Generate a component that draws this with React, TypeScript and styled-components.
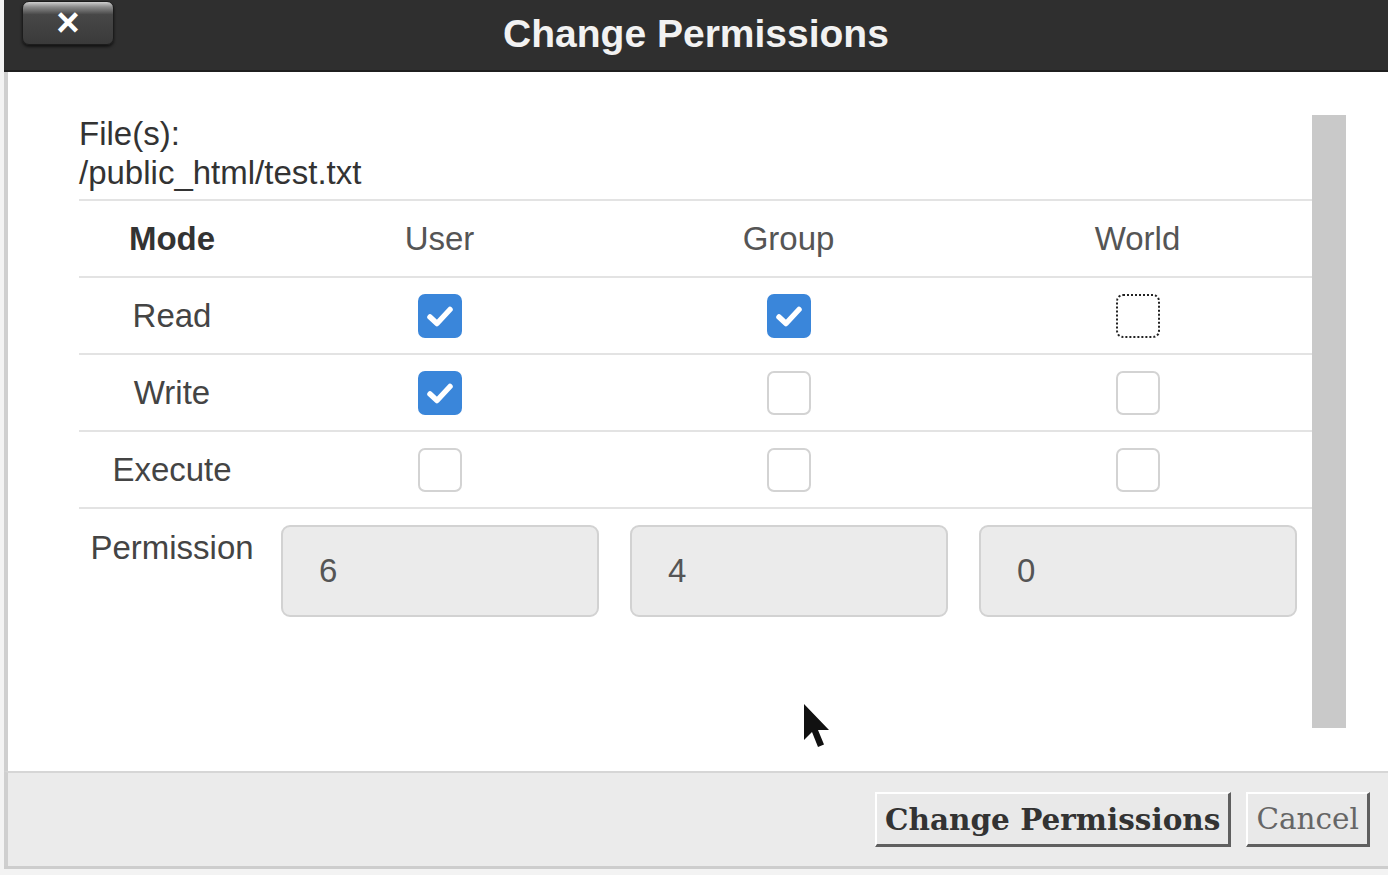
import styled, { createGlobalStyle } from "styled-components";

const GlobalStyle = createGlobalStyle`
  html, body {
    margin: 0;
    padding: 0;
    background: #f3f3f3;
    font-family: "Liberation Sans", Arial, sans-serif;
  }
  * {
    box-sizing: border-box;
  }
`;

type Perm = { label: string; user: boolean; group: boolean; world: boolean };

const rows: Perm[] = [
  { label: "Read", user: true, group: true, world: false },
  { label: "Write", user: true, group: false, world: false },
  { label: "Execute", user: false, group: false, world: false },
];

const CheckBox = ({ checked, focused }: { checked: boolean; focused?: boolean }) => (
  <Box $checked={checked} $focused={focused}>
    {checked && (
      <svg width="44" height="44" viewBox="0 0 44 44">
        <path
          d="M12 23 L19 29.5 L32 15.5"
          fill="none"
          stroke="#fff"
          strokeWidth="5.5"
          strokeLinecap="round"
          strokeLinejoin="round"
        />
      </svg>
    )}
  </Box>
);

export default function App() {
  return (
    <Page>
      <GlobalStyle />
      <Dialog>
        <TitleBar>
          <CloseButton>×</CloseButton>
          <Title>Change Permissions</Title>
        </TitleBar>

        <Body>
          <ScrollArea>
            <Content>
              <FileInfo>
                <div>File(s):</div>
                <div>/public_html/test.txt</div>
              </FileInfo>

              <Row>
                <HeadCell $bold>Mode</HeadCell>
                <HeadCell>User</HeadCell>
                <HeadCell>Group</HeadCell>
                <HeadCell>World</HeadCell>
              </Row>

              {rows.map((r, i) => (
                <Row key={r.label}>
                  <LabelCell>{r.label}</LabelCell>
                  <Cell>
                    <CheckBox checked={r.user} />
                  </Cell>
                  <Cell>
                    <CheckBox checked={r.group} />
                  </Cell>
                  <Cell>
                    <CheckBox checked={r.world} focused={i === 0} />
                  </Cell>
                </Row>
              ))}

              <PermRow>
                <PermLabel>Permission</PermLabel>
                <PermCell>
                  <PermInput readOnly value="6" />
                </PermCell>
                <PermCell>
                  <PermInput readOnly value="4" />
                </PermCell>
                <PermCell>
                  <PermInput readOnly value="0" />
                </PermCell>
              </PermRow>
            </Content>
            <ScrollBar />
          </ScrollArea>
        </Body>

        <Footer>
          <Button $primary>Change Permissions</Button>
          <Button>Cancel</Button>
        </Footer>
      </Dialog>

      <Cursor width="30" height="50" viewBox="0 0 30 50">
        <path d="M2 2 L2 38 L10 30 L16 45 L22 42.5 L16 28 L27 28 Z" fill="#111" />
      </Cursor>
    </Page>
  );
}

const Page = styled.div`
  position: relative;
  width: 1388px;
  height: 875px;
  overflow: hidden;
  background: #f3f3f3;
`;

const Dialog = styled.div`
  margin-left: 4px;
  width: 1384px;
  display: flex;
  flex-direction: column;
  border-bottom: 3px solid #cdcdcd;
`;

const TitleBar = styled.div`
  height: 72px;
  background: #2f2f2f;
  border-bottom: 2px solid #1f1f1f;
  display: grid;
  grid-template-columns: 1fr auto 1fr;
  align-items: start;
`;

const CloseButton = styled.div`
  justify-self: start;
  margin-left: 18px;
  margin-top: 1px;
  width: 92px;
  height: 44px;
  border-radius: 7px;
  border: 1px solid #1c1c1c;
  background: linear-gradient(#cfcfcf 0, #8a8a8a 12%, #474747 30%, #3a3a3a 100%);
  box-shadow: 0 2px 3px rgba(0, 0, 0, 0.6);
  color: #fff;
  font-size: 40px;
  font-weight: bold;
  line-height: 40px;
  text-align: center;
`;

const Title = styled.div`
  color: #f2f2f2;
  font-size: 39px;
  font-weight: bold;
  line-height: 68px;
`;

const Body = styled.div`
  height: 699px;
  background: #fff;
  border-left: 4px solid #cfcfcf;
  padding: 43px 42px 43px 71px;
`;

const ScrollArea = styled.div`
  display: flex;
  height: 100%;
`;

const Content = styled.div`
  flex: 1;
  color: #3a3a3a;
  font-size: 33px;
`;

const ScrollBar = styled.div`
  width: 34px;
  background: #c9c9c9;
`;

const FileInfo = styled.div`
  line-height: 38.5px;
  color: #333;
  padding-bottom: 7px;
  border-bottom: 2px solid #e3e3e3;
`;

const Row = styled.div`
  display: grid;
  grid-template-columns: 186px repeat(3, 1fr);
  align-items: center;
  height: 77px;
  border-bottom: 2px solid #e3e3e3;
`;

const HeadCell = styled.div<{ $bold?: boolean }>`
  text-align: center;
  font-weight: ${({ $bold }) => ($bold ? "bold" : "normal")};
  color: ${({ $bold }) => ($bold ? "#333" : "#555")};
`;

const LabelCell = styled.div`
  text-align: center;
  color: #444;
`;

const Cell = styled.div`
  display: flex;
  justify-content: center;
`;

const Box = styled.span<{ $checked: boolean; $focused?: boolean }>`
  display: block;
  width: 44px;
  height: 44px;
  border-radius: 7px;
  background: ${({ $checked }) => ($checked ? "#3a86da" : "#fff")};
  border: ${({ $checked, $focused }) =>
    $checked ? "none" : $focused ? "2px dotted #222" : "2px solid #d3d3d3"};

  svg {
    display: block;
  }
`;

const PermRow = styled.div`
  display: grid;
  grid-template-columns: 186px repeat(3, 1fr);
  align-items: start;
`;

const PermLabel = styled.div`
  text-align: center;
  color: #444;
  line-height: 38px;
  padding-top: 20px;
`;

const PermCell = styled.div`
  padding: 16px 15px 0 16px;
`;

const PermInput = styled.input`
  display: block;
  width: 100%;
  height: 92px;
  padding: 0 0 0 36px;
  border: 2px solid #d2d2d2;
  border-radius: 9px;
  background: #ebebeb;
  color: #555;
  font-family: "Liberation Sans", Arial, sans-serif;
  font-size: 33px;
  outline: none;
`;

const Footer = styled.div`
  height: 95px;
  background: #ebebeb;
  border-top: 2px solid #d6d6d6;
  border-left: 4px solid #cfcfcf;
  display: flex;
  justify-content: flex-end;
  align-items: center;
  gap: 15px;
  padding-right: 18px;
`;

const Button = styled.button<{ $primary?: boolean }>`
  height: 55px;
  padding: 0 8px;
  background: #e9e9e9;
  border-style: solid;
  border-width: 2px 3px 3px 2px;
  border-color: #fff #5f5f5f #5f5f5f #fff;
  font-family: "DejaVu Serif", "Liberation Serif", serif;
  font-size: 29.5px;
  font-weight: ${({ $primary }) => ($primary ? "bold" : "normal")};
  color: ${({ $primary }) => ($primary ? "#333" : "#666")};
`;

const Cursor = styled.svg`
  position: absolute;
  left: 802px;
  top: 702px;
  filter: blur(0.6px);
`;
